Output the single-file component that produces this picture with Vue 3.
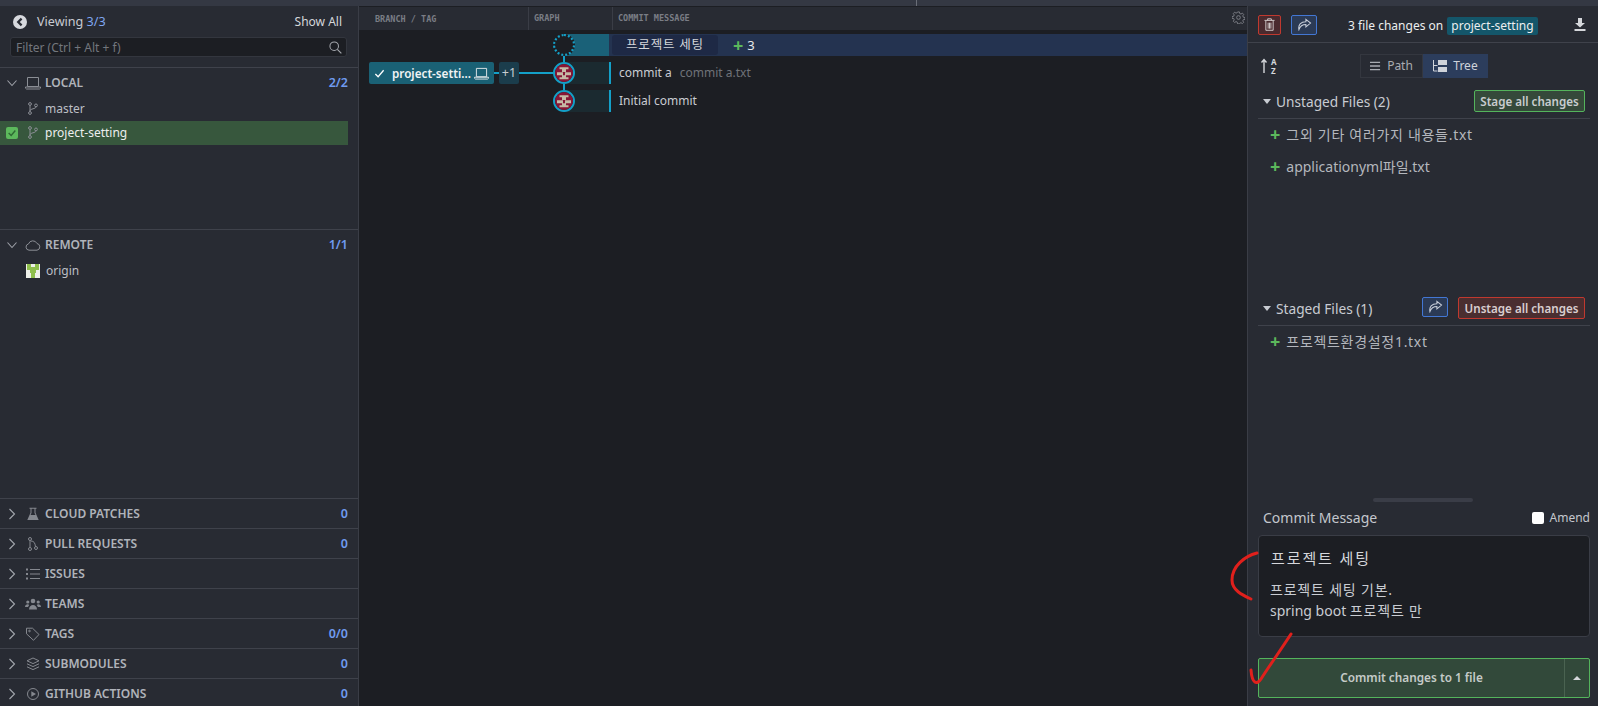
<script setup>
const sections = [
  { name: 'CLOUD PATCHES', count: '0', icon: 'flask' },
  { name: 'PULL REQUESTS', count: '0', icon: 'pr' },
  { name: 'ISSUES', count: '', icon: 'list' },
  { name: 'TEAMS', count: '', icon: 'team' },
  { name: 'TAGS', count: '0/0', icon: 'tag' },
  { name: 'SUBMODULES', count: '0', icon: 'stack' },
  { name: 'GITHUB ACTIONS', count: '0', icon: 'play' },
]
</script>

<template>
  <div class="app">
    <div class="topbar"><i class="tick"></i></div>
    <div class="main">
      <aside class="left">
        <div class="view-head">
          <div class="view-row">
            <svg class="back" viewBox="0 0 14 14" width="14" height="14"><circle cx="7" cy="7" r="7" fill="#d7d9de"/><path d="M8.600 3.600 5.200 7l3.400 3.400" fill="none" stroke="#282b33" stroke-width="2.200"/></svg>
            <span class="viewing">Viewing <b>3/3</b></span>
            <span class="show">Show All</span>
          </div>
          <div class="filter">
            <span>Filter (Ctrl + Alt + f)</span>
            <svg viewBox="0 0 14 14" width="13" height="13"><circle cx="5.600" cy="5.600" r="4.600" fill="none" stroke="#a5a8ae" stroke-width="1.100"/><path d="m9 9 4.300 4.300" stroke="#a5a8ae" stroke-width="1.200"/></svg>
          </div>
        </div>

        <section class="local">
          <div class="sec-row open">
            <svg class="chev" viewBox="0 0 12 12" width="12" height="12"><path d="m1.500 3.500 4.500 5 4.500-5" fill="none" stroke="#9da0a7" stroke-width="1.100"/></svg>
            <svg class="sicon" viewBox="0 0 16 14" width="16" height="14"><path d="M2.500 1.500h11v9h-11zM.5 11h15v1.200l-1 .8h-13l-1-.8z" fill="none" stroke="#8b8e95"/></svg>
            <span class="sec-name">LOCAL</span><span class="count">2/2</span>
          </div>
          <div class="branch">
            <svg class="bicon" viewBox="0 0 10 13" width="10" height="13"><g fill="none" stroke="#8b8e95"><circle cx="2" cy="2" r="1.400"/><circle cx="2" cy="11" r="1.400"/><circle cx="8" cy="3.400" r="1.400"/><path d="M2 3.400v6.200M8 4.800c0 2.200-6 1.800-6 4"/></g></svg>
            <span>master</span>
          </div>
          <div class="branch active">
            <span class="check"><svg viewBox="0 0 12 12" width="10" height="10"><path d="m2 6 3 3 5-6" fill="none" stroke="#2d6a33" stroke-width="1.700"/></svg></span>
            <svg class="bicon" viewBox="0 0 10 13" width="10" height="13"><g fill="none" stroke="#8b8e95"><circle cx="2" cy="2" r="1.400"/><circle cx="2" cy="11" r="1.400"/><circle cx="8" cy="3.400" r="1.400"/><path d="M2 3.400v6.200M8 4.800c0 2.200-6 1.800-6 4"/></g></svg>
            <span>project-setting</span>
          </div>
        </section>

        <section class="remote">
          <div class="sec-row open">
            <svg class="chev" viewBox="0 0 12 12" width="12" height="12"><path d="m1.500 3.500 4.500 5 4.500-5" fill="none" stroke="#9da0a7" stroke-width="1.100"/></svg>
            <svg class="sicon" viewBox="0 0 16 12" width="16" height="12"><path d="M4 11.200A3.200 3.200 0 0 1 3.500 4.900 4.600 4.600 0 0 1 12 4.500a3.400 3.400 0 0 1 0 6.700z" fill="none" stroke="#8b8e95"/></svg>
            <span class="sec-name">REMOTE</span><span class="count">1/1</span>
          </div>
          <div class="origin">
            <svg viewBox="0 0 14 14" width="14" height="14"><rect width="14" height="14" fill="#eef0ea"/><path d="M1 0h4v3h4V0h4v6h-3v3H9v5H5V9H4V6H1z" fill="#8fbf4d"/></svg>
            <span>origin</span>
          </div>
        </section>

        <div v-for="s in sections" :key="s.name" class="sec-row closed">
          <svg class="chev" viewBox="0 0 12 12" width="12" height="12"><path d="m3.500 1 5 5-5 5" fill="none" stroke="#a3a6ad" stroke-width="1.100"/></svg>
          <svg class="sicon" viewBox="0 0 16 14" width="16" height="14">
            <path v-if="s.icon === 'flask'" d="M4.500.8h7v1h-1v4l3.200 7.200H2.300L5.500 5.800v-4h-1z M6.500 1.800v4.200l-1 2h5l-1-2V1.800z" fill="#85888f" fill-rule="evenodd"/>
            <g v-else-if="s.icon === 'pr'" fill="none" stroke="#85888f"><circle cx="5" cy="2" r="1.500"/><circle cx="5" cy="12" r="1.500"/><circle cx="11" cy="11" r="1.500"/><path d="M5 3.500v7M6 4c3 0 4 2 4.500 5.500"/></g>
            <g v-else-if="s.icon === 'list'" fill="#85888f"><rect x="1" y="1.500" width="2" height="2"/><rect x="1" y="6" width="2" height="2"/><rect x="1" y="10.500" width="2" height="2"/><rect x="5" y="2" width="10" height="1"/><rect x="5" y="6.500" width="10" height="1"/><rect x="5" y="11" width="10" height="1"/></g>
            <g v-else-if="s.icon === 'team'" fill="#85888f"><circle cx="8" cy="4" r="2.300"/><circle cx="2.800" cy="5" r="1.600"/><circle cx="13.200" cy="5" r="1.600"/><path d="M4 12.500c0-6 8-6 8 0zM0 10c0-3 3.500-3.500 4.200-2L3 10zM16 10c0-3-3.500-3.500-4.200-2l1.200 2z"/></g>
            <g v-else-if="s.icon === 'tag'" fill="none" stroke="#85888f"><path d="M1.500 1.200h6l6.500 6.300-5.500 5.800-7-6.500z"/><circle cx="4.500" cy="4" r=".8"/></g>
            <g v-else-if="s.icon === 'stack'" fill="none" stroke="#85888f"><path d="M8 1 14 3.800 8 6.600 2 3.800zM2 6.800l6 2.800 6-2.800M2 9.800l6 2.800 6-2.800"/></g>
            <g v-else><circle cx="8" cy="7" r="5.500" fill="none" stroke="#85888f"/><path d="M6.300 4.200 11 7l-4.700 2.800z" fill="#85888f"/></g>
          </svg>
          <span class="sec-name">{{ s.name }}</span><span class="count">{{ s.count }}</span>
        </div>
      </aside>

      <main class="graph">
        <div class="cols">
          <span class="c1">BRANCH / TAG</span>
          <span class="c2">GRAPH</span>
          <span class="c3">COMMIT MESSAGE</span>
          <svg class="gear" viewBox="0 0 14 14" width="13" height="13"><g fill="none" stroke="#7d8087"><circle cx="7" cy="7" r="2"/><path d="M6 1h2l.3 1.700 1.400.6 1.500-1 1.400 1.500-1 1.400.6 1.500 1.800.3v2l-1.800.3-.6 1.400 1 1.500-1.400 1.400-1.500-1-1.400.6L8 13.800H6l-.3-1.800-1.400-.6-1.500 1-1.400-1.400 1-1.500-.6-1.400L0 8V6l1.800-.3.600-1.500-1-1.400 1.400-1.500 1.500 1 1.400-.6z"/></g></svg>
        </div>
        <div class="rows">
          <div class="row">
            <div class="refcol"></div>
            <div class="gcol">
              <span class="wip"></span>
              <i class="stem-down"></i>
              <span class="tail teal"></span>
            </div>
            <div class="msg wipmsg">
              <span class="wipchip">프로젝트 세팅</span>
              <span class="plus">+</span><span class="wipn">3</span>
            </div>
          </div>
          <div class="row">
            <div class="refcol">
              <span class="refchip">
                <svg viewBox="0 0 12 12" width="11" height="11"><path d="m1.500 6.500 3 3 6-7" fill="none" stroke="#fff" stroke-width="1.400"/></svg>
                <span class="refname">project-setti...</span>
                <svg viewBox="0 0 16 14" width="15" height="13"><path d="M2.500 1.500h11v9h-11zM.5 11h15v1.200l-1 .8h-13l-1-.8z" fill="none" stroke="#e4e8ea"/></svg>
              </span>
              <i class="wire short"></i>
              <span class="more">+1</span>
              <i class="wire long"></i>
            </div>
            <div class="gcol">
              <span class="node"><svg viewBox="-9 -9 18 18" width="18" height="18"><circle r="9" fill="#861636"/><path d="M-4.500-5.700h9v2h-2.500v2.700h-4v-2.700h-2.500zM-7-.7h6v3h-6zM1-.7h6v3H1zM-2 2.300h4v2h2.500v1.900h-9V4.300H-2z" fill="#c5b9a5"/></svg></span>
              <i class="stem-down"></i>
              <span class="tail dark"></span>
            </div>
            <div class="msg">
              <span class="title">commit a</span><span class="sub">commit a.txt</span>
            </div>
          </div>
          <div class="row">
            <div class="refcol"></div>
            <div class="gcol">
              <span class="node"><svg viewBox="-9 -9 18 18" width="18" height="18"><circle r="9" fill="#861636"/><path d="M-4.500-5.700h9v2h-2.500v2.700h-4v-2.700h-2.500zM-7-.7h6v3h-6zM1-.7h6v3H1zM-2 2.300h4v2h2.500v1.900h-9V4.300H-2z" fill="#c5b9a5"/></svg></span>
              <span class="tail dark"></span>
            </div>
            <div class="msg">
              <span class="title">Initial commit</span>
            </div>
          </div>
        </div>
      </main>

      <aside class="right">
        <div class="r-head">
          <button class="ibtn red"><svg viewBox="0 0 12 14" width="11" height="13"><path d="M.5 2.500h11M4 2.500V.8h4v1.700M2 3v10.300h8V3M4.500 5v6.500M6 5v6.500M7.500 5v6.500" fill="none" stroke="#d9d3d3"/></svg></button>
          <button class="ibtn blue wide"><svg viewBox="0 0 16 14" width="15" height="13"><path d="M9.500 1.500 14.500 5.500 9.500 9.500V7C6 7 3.500 8 2 12.500 1 7.500 4 4 9.500 4z" fill="none" stroke="#c9cfda" stroke-width="1.100"/></svg></button>
          <div class="r-title">3 file changes on <span class="bchip">project-setting</span></div>
          <svg class="dl" viewBox="0 0 12 13" width="12" height="13"><path d="M4 0h4v5h3L6 9.500 1 5h3zM.5 11h11v2H.5z" fill="#d5d7db"/></svg>
        </div>
        <div class="r-tools">
          <span class="sort">
            <svg viewBox="0 0 8 16" width="8" height="16"><path d="M4 15V2M1.500 4.500 4 1.500l2.500 3" fill="none" stroke="#d5d7db" stroke-width="1.400"/></svg>
            <span class="az"><span>A</span><span>Z</span></span>
          </span>
          <div class="seg">
            <span class="s-path"><svg viewBox="0 0 12 10" width="11" height="10"><path d="M0 1h11M0 5h11M0 9h11" stroke="#a8abb2" stroke-width="1.400"/></svg>Path</span>
            <span class="s-tree"><svg viewBox="0 0 14 12" width="14" height="12"><path d="M.5 0v11h4M.5 5.500h4" fill="none" stroke="#cfd3da"/><rect x="5" y="0" width="9" height="5" fill="#cfd3da"/><rect x="5" y="7" width="9" height="5" fill="#cfd3da"/></svg>Tree</span>
          </div>
        </div>

        <div class="files unstaged">
          <div class="f-head">
            <i class="caret"></i><span class="f-title">Unstaged Files (2)</span>
            <button class="act green">Stage all changes</button>
          </div>
          <div class="file"><span class="plus">+</span><span class="ko">그외 기타 여러가지 내용들.txt</span></div>
          <div class="file"><span class="plus">+</span>applicationyml파일.txt</div>
        </div>

        <div class="files staged">
          <div class="f-head">
            <i class="caret"></i><span class="f-title">Staged Files (1)</span>
            <button class="ibtn blue mid"><svg viewBox="0 0 16 14" width="15" height="13"><path d="M9.500 1.500 14.500 5.500 9.500 9.500V7C6 7 3.500 8 2 12.500 1 7.500 4 4 9.500 4z" fill="none" stroke="#c9cfda" stroke-width="1.100"/></svg></button>
            <button class="act redact">Unstage all changes</button>
          </div>
          <div class="file"><span class="plus">+</span><span class="ko">프로젝트환경설정1.txt</span></div>
        </div>

        <div class="handle"></div>

        <div class="cm-head">
          <span class="cm-title">Commit Message</span>
          <label class="amend"><i class="box"></i>Amend</label>
        </div>
        <div class="cm-box">
          <div class="cm-sum">프로젝트 세팅</div>
          <div class="cm-desc"><span class="ko2">프로젝트 세팅 기본.</span><br>spring boot <span class="ko2">프로젝트 만</span></div>
        </div>
        <div class="commit">
          <span class="commit-text">Commit changes to 1 file</span>
          <span class="commit-more"><i></i></span>
        </div>

        <svg class="scribble" viewBox="0 0 70 142" width="70" height="142">
          <path d="M29 5C17 8 4 18 4 32c0 10 10 15 19 19" fill="none" stroke="#e0201c" stroke-width="3" stroke-linecap="round"/>
          <path d="M63 86C52 103 40 120 33 131c-4 6-9 5-10-9" fill="none" stroke="#e0201c" stroke-width="3" stroke-linecap="round"/>
        </svg>
      </aside>
    </div>
  </div>
</template>

<style>
html, body { margin: 0; padding: 0; background: #282b33; overflow: hidden; }
</style>

<style scoped>
.app { width: 1598px; height: 706px; display: flex; flex-direction: column; font-family: "Noto Sans", "Noto Sans CJK KR", sans-serif; font-size: 13px; color: #d5d7db; background: #282b33; overflow: hidden; }
.topbar { height: 6px; background: #343843; flex: none; display: flex; padding-left: 916px; }
.tick { width: 1px; height: 6px; background: #6a6e78; }
.main { flex: 1; display: flex; min-height: 0; }

.left { width: 358px; flex: none; display: flex; flex-direction: column; background: #282b33; border-right: 1px solid #3a3d46; overflow: hidden; }
.view-head { height: 61px; flex: none; padding: 0 11px 0 10px; border-bottom: 1px solid #3f424b; }
.view-row { height: 31px; display: flex; align-items: center; }
.back { margin-left: 3px; }
.viewing { margin-left: 10px; color: #c8cbd2; font-size: 12.600px; }
.viewing b { font-weight: 400; color: #7fa6f2; }
.show { margin-left: auto; margin-right: 5px; color: #d5d7db; font-size: 12px; }
.filter { background: #1c1e23; border: 1px solid #33363e; border-radius: 3px; display: flex; align-items: center; justify-content: space-between; padding: 0 4px 0 5px; color: #73767d; font-size: 12px; height: 18px; }

.local { height: 161px; flex: none; border-bottom: 1px solid #3f424b; }
.local .sec-row { margin-bottom: -1px; }
.remote { height: 268px; flex: none; }
.sec-row { height: 30px; display: flex; align-items: center; padding: 0 10px 0 6px; }
.sec-row.open { height: 29px; padding-bottom: 1px; }
.closed { flex: none; height: 29px; border-top: 1px solid #3f424b; }
.chev { flex: none; }
.sicon { margin-left: 7px; flex: none; }
.sec-name { margin-left: 4px; color: #b0b3ba; font-size: 12px; font-weight: 600; }
.count { margin-left: auto; color: #6f9bf0; font-size: 12.500px; font-weight: 600; }
.branch { height: 23px; padding-bottom: 1px; display: flex; align-items: center; padding-left: 28px; color: #bcbfc5; width: 320px; font-size: 12px; }
.branch .bicon { margin-right: 7px; }
.branch.active { background: #37573d; color: #eceeef; padding-left: 6px; width: 342px; }
.check { width: 12px; height: 12px; border-radius: 2px; background: #5cb85c; margin-right: 10px; display: flex; align-items: center; justify-content: center; }
.origin { height: 21px; padding-bottom: 1px; display: flex; align-items: center; padding-left: 26px; gap: 6px; color: #bcbfc5; font-size: 12px; }

.graph { flex: 1; min-width: 0; background: #1c1e23; display: flex; flex-direction: column; border-right: 1px solid #3a3d46; }
.cols { height: 23px; flex: none; background: #282b33; display: grid; grid-template-columns: 169px 84px 1fr 26px; align-items: center; font-family: "DejaVu Sans Mono", monospace; font-size: 8.500px; color: #7a7d85; font-weight: 700; margin-top: 1px; }
.c1 { padding-left: 16px; }
.c2, .c3 { padding-left: 5px; border-left: 1px solid #3a3d46; height: 23px; line-height: 23px; }
.gear { margin-top: -3px; margin-left: 11px; }
.rows { padding-top: 1px; }
.row { height: 28px; display: grid; grid-template-columns: 194px 56px 1fr; align-items: center; }
.refcol { display: flex; align-items: center; padding-left: 10px; }
.refchip { width: 125px; height: 22px; box-sizing: border-box; background: #1a6175; border-radius: 2px; display: flex; align-items: center; padding: 0 5px 0 5px; color: #f0f3f4; font-weight: 600; font-size: 11.700px; }
.refname { margin-left: 7px; flex: 1; white-space: nowrap; }
.wire { height: 2px; background: #14a0c8; display: block; }
.wire.short { width: 5px; }
.wire.long { flex: 1; }
.more { width: 20px; height: 22px; background: #1b3d4c; border-radius: 2px; text-align: center; line-height: 22px; color: #c8cdd2; font-size: 12.500px; }
.gcol { position: relative; height: 28px; }
.node, .wip { position: absolute; left: 0; top: 3px; width: 22px; height: 22px; box-sizing: border-box; border-radius: 50%; z-index: 2; }
.node { border: 2px solid #14a0c8; background: #1c1e23; }
.node svg { display: block; }
.wip { border: 2px dotted #14a0c8; background: #1c1e23; }
.stem-down { position: absolute; left: 10px; top: 25px; width: 2px; height: 6px; background: #14a0c8; z-index: 1; }
.tail { position: absolute; left: 11px; right: 0; top: 3px; height: 22px; }
.tail.teal { background: #1a6178; }
.tail.dark { background: #1b2a30; border-right: 2px solid #14a0c8; right: -2px; }
.msg { display: flex; align-items: center; height: 22px; padding-left: 10px; box-sizing: border-box; padding-bottom: 1px; }
.title { color: #c9ccd2; font-size: 12px; }
.sub { margin-left: 8px; color: #6f7278; font-size: 12px; }
.wipmsg { background: #243350; padding-left: 3px; padding-bottom: 0; }
.wipchip { width: 106px; height: 20px; background: #1e2945; border-radius: 3px; text-align: center; line-height: 19px; color: #d5d7db; font-size: 12.500px; letter-spacing: .8px; }
.plus { color: #5cb85c; font-weight: 700; font-size: 18px; line-height: 1; }
.wipmsg .plus { margin-left: 15px; }
.wipn { margin-left: 4px; color: #e6e8ea; }

.right { width: 350px; flex: none; display: flex; flex-direction: column; position: relative; background: #282b33; padding: 0 8px 0 10px; box-sizing: border-box; }
.ibtn { box-sizing: border-box; padding: 0; display: inline-flex; align-items: center; justify-content: center; border-radius: 2px; background: transparent; flex: none; }
.ibtn.red { width: 23px; height: 20px; border: 1px solid #c0392f; background: #4a2a2e; }
.ibtn.blue { width: 26px; height: 20px; border: 1px solid #4377d4; background: #2b3a55; }
.r-head { display: flex; align-items: center; border-bottom: 1px solid #3f424b; margin: 0 -8px 0 -10px; padding: 1px 12px 0 10px; flex: none; box-sizing: border-box; height: 37px; }
.wide { margin-left: 10px; }
.r-title { margin-left: 31px; padding-top: 3px; font-size: 12px; color: #eceeef; white-space: nowrap; }
.bchip { display: inline-block; background: #14566a; padding: 0 4px; height: 18px; line-height: 18px; border-radius: 2px; margin-left: 1px; }
.dl { margin-left: auto; }
.r-tools { height: 45px; flex: none; display: flex; align-items: center; padding-left: 2px; }
.sort { display: flex; align-items: center; width: 100px; gap: 3px; }
.az { display: flex; flex-direction: column; gap: 2px; }
.az span { font-size: 8px; line-height: 7px; height: 7px; font-weight: 700; color: #d5d7db; }
.seg { display: flex; height: 24px; }
.seg > span { display: flex; align-items: center; gap: 6px; font-size: 12px; box-sizing: border-box; }
.s-path { width: 63px; border: 1px solid #34373f; justify-content: center; color: #a8abb2; }
.s-tree { width: 65px; background: #2c3d5c; justify-content: center; color: #cfd3da; }
.files { flex: none; }
.unstaged { height: 207px; }
.staged { height: 203px; }
.f-head { height: 31px; box-sizing: border-box; display: flex; align-items: center; border-bottom: 1px solid #3f424b; padding: 0 0 4px 5px; }
.caret { width: 0; height: 0; border-left: 4.500px solid transparent; border-right: 4.500px solid transparent; border-top: 5px solid #c8cbd2; margin-right: 5px; }
.f-title { font-size: 13.700px; color: #c8cbd2; margin-right: auto; }
.act { font-family: inherit; font-weight: 600; font-size: 11.600px; height: 22px; box-sizing: border-box; padding: 0; border-radius: 2px; color: #c9cdd0; margin-right: 5px; }
.green { width: 111px; border: 1px solid #54b45c; background: #35493a; }
.redact { width: 127px; border: 1px solid #c0392f; background: #4a2e30; color: #d9cfd0; }
.mid { margin-right: 10px; margin-bottom: 3px; }
.file { height: 32px; box-sizing: border-box; padding-bottom: 2px; display: flex; align-items: center; padding-left: 12px; font-size: 14px; color: #b4b7bd; }
.file .plus { margin-right: 6px; }
.ko { letter-spacing: .7px; }
.handle { width: 100px; height: 4px; background: #3a3d47; border-radius: 2px; margin: 0 auto; flex: none; transform: translateX(-1px); }
.cm-head { height: 33px; box-sizing: border-box; padding-bottom: 2px; display: flex; align-items: center; justify-content: space-between; padding-left: 5px; flex: none; }
.cm-title { font-size: 14px; color: #c4c7cd; }
.amend { display: flex; align-items: center; gap: 6px; font-size: 12px; color: #c4c7cd; }
.box { width: 12px; height: 12px; background: #fff; border-radius: 2px; border: 0; display: block; }
.cm-box { height: 102px; flex: none; box-sizing: border-box; background: #1c1e23; border: 1px solid #3a3d46; border-radius: 4px; padding: 11px 11px; }
.cm-sum { font-size: 15px; line-height: 22px; color: #d5d7db; letter-spacing: 1.900px; padding-left: 1px; }
.cm-desc { margin-top: 10px; font-size: 14px; line-height: 21px; color: #c9ccd2; }
.ko2 { letter-spacing: .8px; }
.commit { margin-top: 21px; height: 40px; flex: none; box-sizing: border-box; border: 1px solid #54b45c; border-radius: 2px; background: #32493a; display: flex; align-items: center; }
.commit-text { flex: 1; text-align: center; font-weight: 600; font-size: 11.800px; color: #c5cbc8; padding-bottom: 2px; }
.commit-more { width: 24px; height: 38px; border-left: 1px solid #4a6351; display: flex; align-items: center; justify-content: center; }
.commit-more i { width: 0; height: 0; border-left: 4px solid transparent; border-right: 4px solid transparent; border-bottom: 4px solid #d5d7db; }
.scribble { position: absolute; left: -20px; top: 542px; pointer-events: none; z-index: 5; overflow: visible; }
</style>
